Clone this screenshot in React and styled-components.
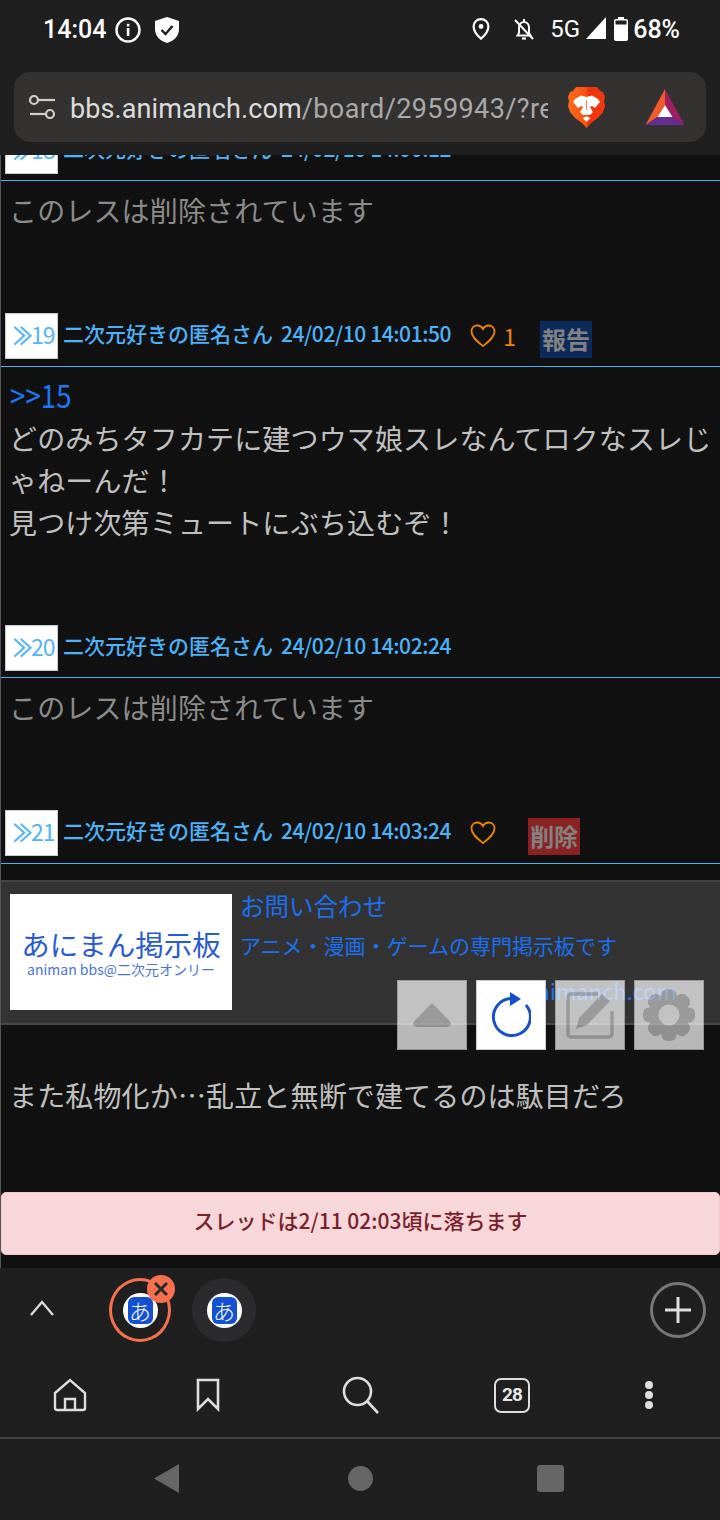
import React from 'react';
import styled, { createGlobalStyle } from 'styled-components';

const GlobalStyle = createGlobalStyle`
  html, body { margin: 0; padding: 0; background: #1f1f1f; }
  * { box-sizing: border-box; }
  body { font-family: "Noto Sans CJK JP", Roboto, sans-serif; }
`;

const Screen = styled.div`
  width: 720px;
  height: 1520px;
  display: flex;
  flex-direction: column;
  overflow: hidden;
  background: #1f1f1f;
`;

/* browser chrome, top */
const TopChrome = styled.header`
  height: 155px;
  flex: none;
  background: #1f1f1f;
  position: relative;
  z-index: 2;
`;
const StatusBar = styled.div`
  height: 72px;
  padding: 17px 40px 0 43px;
  display: flex;
  color: #fff;
  font-family: Roboto, sans-serif;
  font-weight: 500;
`;
const Clock = styled.span`
  font-size: 25px;
  line-height: 26px;
  width: 72px;
`;
const StatusRight = styled.div`
  margin-left: auto;
  display: flex;
  align-items: flex-start;
`;
const NetLabel = styled.span`
  font-size: 24px;
  font-weight: 400;
  line-height: 24px;
  margin: 0 6px 0 15px;
`;
const Percent = styled.span`
  font-size: 25px;
  line-height: 26px;
  margin-left: 5px;
`;
const UrlBar = styled.div`
  margin: 0 14px;
  height: 70px;
  background: #333231;
  border-radius: 16px;
  display: flex;
  align-items: center;
  padding-left: 14px;
`;
const UrlText = styled.div`
  width: 478px;
  margin-left: 14px;
  padding-top: 3px;
  overflow: hidden;
  white-space: nowrap;
  font-family: Roboto, sans-serif;
  font-size: 27px;
  color: #a9a9a9;
  letter-spacing: 0.4px;
  b { font-weight: 400; color: #dcdcdc; letter-spacing: 0.1px; }
`;

/* thread */
const Main = styled.main`
  flex: 1;
  min-height: 0;
  background: #111;
  border-left: 1px solid #555;
  position: relative;
  display: flex;
  flex-direction: column;
  overflow: hidden;
`;
const Thread = styled.div`
  margin-top: -27px;
`;
const PostHead = styled.div`
  min-height: 53px;
  padding: 0 4px;
  display: flex;
  align-items: flex-start;
  color: #4db2f8;
  font-size: 21px;
  font-weight: 500;
  line-height: 40px;
  border-bottom: 1px solid #4fb0f0;
`;
const ResNumber = styled.span`
  width: 53px;
  height: 46px;
  flex: none;
  background: #fff;
  border: 1px solid #ccc;
  display: flex;
  align-items: center;
  padding: 0 0 4px 7px;
  font-size: 23px;
  font-weight: 400;
  line-height: 1;
  color: #52b4fa;
  letter-spacing: -1px;
`;
const Chevrons = styled.span`
  display: inline-block;
  width: 18px;
  font-size: 25px;
  font-weight: 700;
  transform: scaleX(0.78);
  transform-origin: left center;
`;
const Author = styled.span`
  margin-left: 5px;
  white-space: nowrap;
`;
const PostDate = styled.span`
  margin-left: 8px;
  letter-spacing: -0.42px;
`;
const Like = styled.span`
  margin-left: 19px;
  height: 46px;
  display: flex;
  align-items: center;
  color: #f08400;
  font-size: 23px;
  font-weight: 400;
  svg { margin-right: 7px; }
`;
const ActionTag = styled.span`
  margin: 8px 0 8px ${p => p.$left}px;
  width: 52px;
  height: 37px;
  background: ${p => p.$bg};
  color: #828282;
  font-size: 24px;
  font-weight: 700;
  line-height: 36px;
  text-align: center;
  white-space: nowrap;
`;
const PostBody = styled.div`
  padding: 8px 8px 82px;
  font-size: 28px;
  line-height: 42px;
  letter-spacing: 0.15px;
  color: ${p => (p.$deleted ? '#8b8b8b' : '#c0c0c0')};
  white-space: pre-line;
`;
const Anchor = styled.a`
  color: #1a78f2;
  display: block;
  font-size: 32px;
  line-height: 38px;
  margin: 0 0 4px 1px;
  transform: scaleX(0.86);
  transform-origin: left center;
`;

/* footer card */
const FooterCard = styled.div`
  margin-top: 16px;
  height: 145px;
  background: #333;
  border-top: 2px solid #444;
  border-bottom: 2px solid #484848;
  padding: 12px 9px;
  display: flex;
  gap: 8px;
`;
const LogoBox = styled.div`
  width: 222px;
  height: 116px;
  flex: none;
  background: #fff;
  color: #2a5bd0;
  text-align: center;
  padding-top: 32px;
`;
const LogoTitle = styled.div`
  font-size: 28.5px;
  line-height: 35px;
  white-space: nowrap;
`;
const LogoSub = styled.div`
  font-size: 14px;
  line-height: 16px;
  white-space: nowrap;
  opacity: 0.85;
`;
const FooterText = styled.div`
  flex: 1;
  color: #1a70ef;
  display: flex;
  flex-direction: column;
`;
const FooterTitle = styled.div`
  font-size: 24.5px;
  line-height: 26px;
  margin-top: -1px;
`;
const FooterDesc = styled.div`
  font-size: 21px;
  line-height: 28px;
  margin-top: 12px;
  white-space: nowrap;
`;
const FooterLink = styled.div`
  font-size: 22px;
  line-height: 28px;
  margin-top: 17px;
  text-align: right;
  padding-right: 34px;
`;
const LastBody = styled.div`
  margin-top: 49px;
  padding: 0 8px;
  font-size: 28px;
  line-height: 42px;
  letter-spacing: 0.15px;
  color: #c0c0c0;
`;
const DropNotice = styled.div`
  margin-top: auto;
  margin-bottom: 13px;
  height: 63px;
  background: #f8d7da;
  border: 1px solid #f5c6cb;
  border-radius: 5px;
  color: #7a1f2b;
  font-size: 21px;
  font-weight: 500;
  line-height: 55px;
  text-align: center;
`;

/* floating buttons lie over the page */
const FloatBar = styled.div`
  position: absolute;
  top: 825px;
  right: 16px;
  display: flex;
  gap: 9px;
`;
const FloatButton = styled.button`
  width: 70px;
  height: 70px;
  padding: 0;
  background: #fff;
  border: 1px solid #ccc;
  opacity: ${p => (p.$active ? 1 : 0.7)};
  display: flex;
  align-items: center;
  justify-content: center;
  svg { flex: none; }
`;

/* browser chrome, bottom */
const BottomChrome = styled.footer`
  height: 252px;
  flex: none;
  background: #1f1f1f;
  display: flex;
  flex-direction: column;
`;
const TabRow = styled.div`
  height: 85px;
  display: flex;
  align-items: flex-start;
  padding: 10px 14px 0 0;
  position: relative;
`;
const ChevronCell = styled.div`
  width: 109px;
  height: 60px;
  padding-left: 29px;
  display: flex;
  align-items: center;
`;
const TabCircle = styled.div`
  width: ${p => (p.$active ? 62 : 64)}px;
  height: 64px;
  border-radius: 50%;
  margin-right: 21px;
  display: flex;
  align-items: center;
  justify-content: center;
  position: relative;
  background: ${p => (p.$active ? 'transparent' : '#2b2b2d')};
  border: ${p => (p.$active ? '3px solid #f5704d' : 'none')};
`;
const Favicon = styled.div`
  width: 35px;
  height: 35px;
  border-radius: 50%;
  background: #fff;
  display: flex;
  align-items: center;
  justify-content: center;
`;
const FaviconGlyph = styled.span`
  width: 25px;
  height: 27px;
  background: #1450d2;
  border-radius: 6px;
  color: #fff;
  font-size: 22px;
  line-height: 26px;
  text-align: center;
  font-weight: 300;
`;
const CloseBadge = styled.span`
  position: absolute;
  top: -6px;
  right: -7px;
  width: 28px;
  height: 28px;
  border-radius: 50%;
  background: #f7704e;
  display: flex;
  align-items: center;
  justify-content: center;
`;
const AddTab = styled.div`
  margin-left: auto;
  margin-top: 4px;
  width: 56px;
  height: 56px;
  border-radius: 50%;
  border: 3px solid #777;
  display: flex;
  align-items: center;
  justify-content: center;
`;
const ToolRow = styled.div`
  height: 84px;
  display: grid;
  grid-template-columns: 140px 136px 170px 132px 142px;
  align-items: center;
  justify-items: center;
`;
const TabCount = styled.div`
  width: 36px;
  height: 35px;
  border: 2.5px solid #dedede;
  border-radius: 7px;
  color: #e6e6e6;
  font-family: Roboto, sans-serif;
  font-size: 19px;
  font-weight: 700;
  line-height: 30px;
  text-align: center;
  letter-spacing: -1px;
`;
const AndroidNav = styled.div`
  flex: 1;
  border-top: 2px solid #444;
  display: flex;
  align-items: center;
  padding-left: 154px;
  padding-bottom: 2px;
`;
const NavBack = styled.svg`
  margin-right: 169px;
`;
const NavHome = styled.span`
  width: 25px;
  height: 25px;
  border-radius: 50%;
  background: #666;
  margin-right: 164px;
`;
const NavRecent = styled.span`
  width: 27px;
  height: 27px;
  border-radius: 3px;
  background: #666;
`;

const InfoIcon = () => (
  <svg width="26" height="26" viewBox="0 0 26 26" fill="none" style={{ flex: 'none' }}>
    <circle cx="13" cy="13" r="11.5" stroke="#fff" strokeWidth="2.4" />
    <rect x="11.8" y="11" width="2.6" height="8" fill="#fff" />
    <rect x="11.8" y="6.8" width="2.6" height="2.6" fill="#fff" />
  </svg>
);

const ShieldIcon = () => (
  <svg width="24" height="26" viewBox="0 0 24 26" style={{ marginLeft: 14 }}>
    <path d="M12 0L24 4v8c0 7-5 12-12 14C5 24 0 19 0 12V4z" fill="#fff" />
    <path d="M6.5 13l4 4 7-8" fill="none" stroke="#1f1f1f" strokeWidth="2.4" />
  </svg>
);

const PinIcon = () => (
  <svg width="18" height="22" viewBox="0 0 18 22" fill="none" style={{ marginTop: 1 }}>
    <path d="M9 1.2c4.2 0 7.4 3 7.4 7.2 0 4.4-4 9.3-7.4 12.2C5.6 17.7 1.6 12.8 1.6 8.4 1.6 4.2 4.8 1.2 9 1.2z" stroke="#fff" strokeWidth="2.2" />
    <circle cx="9" cy="8.5" r="2.4" fill="#fff" />
  </svg>
);

const BellOffIcon = () => (
  <svg width="22" height="23" viewBox="0 0 22 23" fill="none" style={{ marginLeft: 23, marginTop: 1 }}>
    <path d="M6 9.5c0-3 2-5.5 5-5.5s5 2.5 5 5.5V15l1.5 2.5H4.5L6 15z" stroke="#fff" strokeWidth="2" />
    <path d="M9 20.5h4" stroke="#fff" strokeWidth="2.2" />
    <path d="M11 1v3M2 2l18 19" stroke="#fff" strokeWidth="2" />
  </svg>
);

const SignalIcon = () => (
  <svg width="20" height="22" viewBox="0 0 20 22">
    <path d="M20 0v22H0z" fill="#fff" />
  </svg>
);

const BatteryIcon = () => (
  <svg width="14" height="24" viewBox="0 0 14 24" style={{ marginLeft: 8 }}>
    <rect x="4" y="0" width="6" height="3" fill="#fff" />
    <rect x="0" y="2" width="14" height="22" rx="2" fill="#fff" />
    <rect x="1.5" y="3.5" width="11" height="4" fill="#1f1f1f" />
  </svg>
);

const TuneIcon = () => (
  <svg width="28" height="24" viewBox="0 0 28 24" fill="none" stroke="#cfcfcf" strokeWidth="2.2">
    <circle cx="6" cy="5" r="4" />
    <path d="M10 5h17" />
    <circle cx="22" cy="19" r="4" />
    <path d="M2 19h16" />
  </svg>
);

const BraveIcon = () => (
  <svg width="37" height="41" viewBox="0 0 37 41" style={{ marginLeft: 20, flex: 'none' }}>
    <defs>
      <linearGradient id="braveFill" x1="0" x2="1" y1="0" y2="0">
        <stop offset="0" stopColor="#fb6a1c" />
        <stop offset="0.5" stopColor="#fb5010" />
        <stop offset="0.55" stopColor="#f0300f" />
        <stop offset="1" stopColor="#f23a0c" />
      </linearGradient>
    </defs>
    <path d="M8 0h21l3 4 3 1 2 5-1 4 1 5-2 6-5 6-7 5-4.5 5-4.5-5-7-5-5-6-2-6 1-5-1-4 2-5 3-1z" fill="url(#braveFill)" />
    <path d="M7 12l6-3.5 5.5 1.5L24 8.500l6 3.500 2 3-5 6-3-2-2 1 3 5-3 3H15l-3-3 3-5-2-1-3 2-5-6z" fill="#fff" />
    <path d="M18.5 13v10M14 31l4.5-2 4.500 2-4.500 4z" fill="#fff" stroke="#fb5010" strokeWidth="0.7" />
  </svg>
);

const BatIcon = () => (
  <svg width="40" height="36" viewBox="0 0 39 36" style={{ marginLeft: 40, flex: 'none' }}>
    <path d="M19.5 0L39 36 27 28 19.5 16z" fill="#9e1f63" />
    <path d="M19.5 0L0 36 12 28 19.5 16z" fill="#f15a2b" />
    <path d="M0 36h39L27 28H12z" fill="#662d91" />
    <path d="M19.5 16L12 28h15z" fill="#fff" />
  </svg>
);

const HeartIcon = () => (
  <svg width="26" height="24" viewBox="0 0 26 24" fill="none">
    <path d="M13 22C8 18 1.5 13.5 1.5 7.5 1.5 4 4 1.5 7.3 1.5c2.5 0 4.5 1.3 5.7 3.5 1.2-2.2 3.2-3.5 5.7-3.5 3.3 0 5.8 2.5 5.8 6 0 6-6.500 10.500-11.500 14.500z" stroke="#f08400" strokeWidth="1.8" />
  </svg>
);

const iconGrey = '#c6c6c6';

const TriangleUp = () => (
  <svg width="40" height="26" viewBox="0 0 40 26">
    <path d="M20 3L37 20.5q1 3-2 3H5q-3 0-2-3z" fill={iconGrey} stroke={iconGrey} strokeWidth="3" strokeLinejoin="round" />
  </svg>
);

const RefreshIcon = () => (
  <svg width="40" height="46" viewBox="0 0 40 46" fill="none">
    <path d="M21 6.5A18.5 18.5 0 1 0 35 13" stroke="#1450c8" strokeWidth="3" />
    <path d="M19 0l11 7-11 7z" fill="#1450c8" />
  </svg>
);

const EditIcon = () => (
  <svg width="48" height="48" viewBox="0 0 48 48" fill="none">
    <path d="M32 3H5a3 3 0 0 0-3 3v37a3 3 0 0 0 3 3h38a3 3 0 0 0 3-3V20" stroke={iconGrey} strokeWidth="3.5" />
    <path d="M10 38l3-11L36 3l8 7-23 24z" fill={iconGrey} />
  </svg>
);

/* eight round lobes around a ring */
const GearIcon = () => (
  <svg width="54" height="52" viewBox="-27 -26 54 52">
    <circle r="20.5" fill={iconGrey} />
    {[0, 45, 90, 135, 180, 225, 270, 315].map(a => (
      <rect key={a} x="-7.5" y="-26" width="15" height="14" rx="6" fill={iconGrey} transform={`rotate(${a})`} />
    ))}
    <circle r="10.5" fill="#fff" />
  </svg>
);

const ChevronUp = () => (
  <svg width="26" height="18" viewBox="0 0 26 18" fill="none">
    <path d="M2 16L13 3l11 13" stroke="#d8d8d8" strokeWidth="2.4" />
  </svg>
);

const CloseX = () => (
  <svg width="16" height="16" viewBox="0 0 16 16">
    <path d="M2 2l12 12M14 2L2 14" stroke="#2a2a2a" strokeWidth="3" />
  </svg>
);

const PlusIcon = () => (
  <svg width="28" height="28" viewBox="0 0 28 28">
    <path d="M14 1v26M1 14h26" stroke="#dedede" strokeWidth="3" />
  </svg>
);

const HomeIcon = () => (
  <svg width="34" height="34" viewBox="0 0 34 34" fill="none" stroke="#dedede" strokeWidth="2.4">
    <path d="M2 15L17 2l15 13v15a2 2 0 0 1-2 2H4a2 2 0 0 1-2-2z" />
    <path d="M12 32V21h10v11" />
  </svg>
);

const BookmarkIcon = () => (
  <svg width="24" height="34" viewBox="0 0 24 34" fill="none" stroke="#dedede" strokeWidth="2.6">
    <path d="M2 2h20v29l-10-10L2 31z" />
  </svg>
);

const SearchIcon = () => (
  <svg width="38" height="38" viewBox="0 0 38 38" fill="none" stroke="#dedede" strokeWidth="2.6">
    <circle cx="15.5" cy="15.5" r="13.5" />
    <path d="M25 25l11 12" />
  </svg>
);

const MoreIcon = () => (
  <svg width="10" height="30" viewBox="0 0 10 30" fill="#dedede">
    <circle cx="5" cy="5" r="4" />
    <circle cx="5" cy="15" r="4" />
    <circle cx="5" cy="25" r="4" />
  </svg>
);

const Favi = () => (
  <Favicon><FaviconGlyph>あ</FaviconGlyph></Favicon>
);

const ResNo = ({ n }) => (
  <ResNumber><Chevrons>≫</Chevrons>{n}</ResNumber>
);

const Byline = ({ date }) => (
  <Author>二次元好きの匿名さん<PostDate>{date}</PostDate></Author>
);

export default function App() {
  return (
    <Screen>
      <GlobalStyle />
      <TopChrome>
        <StatusBar>
          <Clock>14:04</Clock>
          <InfoIcon />
          <ShieldIcon />
          <StatusRight>
            <PinIcon />
            <BellOffIcon />
            <NetLabel>5G</NetLabel>
            <SignalIcon />
            <BatteryIcon />
            <Percent>68%</Percent>
          </StatusRight>
        </StatusBar>
        <UrlBar>
          <TuneIcon />
          <UrlText><b>bbs.animanch.com</b>/board/2959943/?res=21</UrlText>
          <BraveIcon />
          <BatIcon />
        </UrlBar>
      </TopChrome>

      <Main>
        <Thread>
          <PostHead>
            <ResNo n="18" />
            <Byline date="24/02/10 14:00:12" />
          </PostHead>
          <PostBody $deleted>このレスは削除されています</PostBody>
          <PostHead>
            <ResNo n="19" />
            <Byline date="24/02/10 14:01:50" />
            <Like><HeartIcon />1</Like>
            <ActionTag $left={24} $bg="#0c2a5c">報告</ActionTag>
          </PostHead>
          <PostBody>
            <Anchor>&gt;&gt;15</Anchor>
            {'どのみちタフカテに建つウマ娘スレなんてロクなスレじゃねーんだ！\n見つけ次第ミュートにぶち込むぞ！'}
          </PostBody>
          <PostHead>
            <ResNo n="20" />
            <Byline date="24/02/10 14:02:24" />
          </PostHead>
          <PostBody $deleted>このレスは削除されています</PostBody>
          <PostHead>
            <ResNo n="21" />
            <Byline date="24/02/10 14:03:24" />
            <Like><HeartIcon /></Like>
            <ActionTag $left={25} $bg="#8a2222">削除</ActionTag>
          </PostHead>
        </Thread>

        <FooterCard>
          <LogoBox>
            <LogoTitle>あにまん掲示板</LogoTitle>
            <LogoSub>animan bbs@二次元オンリー</LogoSub>
          </LogoBox>
          <FooterText>
            <FooterTitle>お問い合わせ</FooterTitle>
            <FooterDesc>アニメ・漫画・ゲームの専門掲示板です</FooterDesc>
            <FooterLink>bbs.animanch.com</FooterLink>
          </FooterText>
        </FooterCard>

        <LastBody>また私物化か…乱立と無断で建てるのは駄目だろ</LastBody>
        <DropNotice>スレッドは2/11 02:03頃に落ちます</DropNotice>

        <FloatBar>
          <FloatButton><TriangleUp /></FloatButton>
          <FloatButton $active><RefreshIcon /></FloatButton>
          <FloatButton><EditIcon /></FloatButton>
          <FloatButton><GearIcon /></FloatButton>
        </FloatBar>
      </Main>

      <BottomChrome>
        <TabRow>
          <ChevronCell><ChevronUp /></ChevronCell>
          <TabCircle $active>
            <Favi />
            <CloseBadge><CloseX /></CloseBadge>
          </TabCircle>
          <TabCircle><Favi /></TabCircle>
          <AddTab><PlusIcon /></AddTab>
        </TabRow>
        <ToolRow>
          <HomeIcon />
          <BookmarkIcon />
          <SearchIcon />
          <TabCount>28</TabCount>
          <MoreIcon />
        </ToolRow>
        <AndroidNav>
          <NavBack width="25" height="29" viewBox="0 0 25 29">
            <path d="M25 0v29L0 14.5z" fill="#666" />
          </NavBack>
          <NavHome />
          <NavRecent />
        </AndroidNav>
      </BottomChrome>
    </Screen>
  );
}
